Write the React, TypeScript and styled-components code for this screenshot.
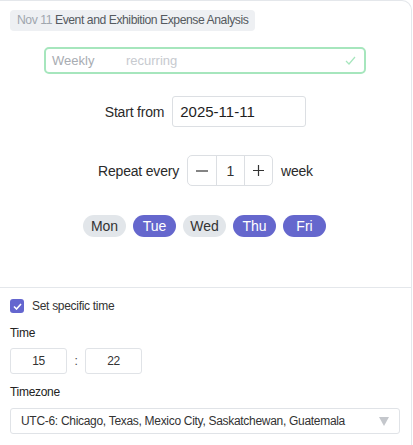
import React from "react";
import styled, { createGlobalStyle } from "styled-components";

const Global = createGlobalStyle`
  html, body { margin: 0; padding: 0; background: #fff; }
  body { font-family: "Liberation Sans", Arial, sans-serif; color: #222; }
  * { box-sizing: border-box; }
`;

const Page = styled.div`
  width: 413px;
  height: 445px;
  overflow: hidden;
  display: flex;
  flex-direction: column;
`;

const TopCard = styled.div`
  width: 412px;
  height: 288px;
  border-top: 1px solid #e4e7eb;
  border-right: 1px solid #e4e7eb;
  border-bottom: 1px solid #e4e7eb;
  border-top-right-radius: 10px;
  padding: 9px 0 0 10px;
  display: flex;
  flex-direction: column;
`;

const TitleChip = styled.div`
  align-self: flex-start;
  height: 21px;
  padding: 0 7px 0 7px;
  background: #eef0f3;
  border-radius: 4px;
  font-size: 12.2px;
  letter-spacing: -0.45px;
  line-height: 21px;
  color: #555a60;
`;

const Muted = styled.span`
  color: #a0a6ae;
`;

const RecurInput = styled.div`
  margin: 16px 0 0 34px;
  width: 322px;
  height: 27px;
  border: 2.5px solid #a6e6bd;
  border-radius: 5px;
  display: flex;
  align-items: center;
  padding: 0 8px 0 6px;
  font-size: 13px;
`;

const Weekly = styled.span`
  color: #a8acb2;
  width: 74px;
`;

const Recurring = styled.span`
  color: #c7cacf;
  flex: 1;
`;

const Row = styled.div<{ $mt: number }>`
  display: flex;
  align-items: center;
  justify-content: center;
  margin-top: ${(p) => p.$mt}px;
  padding-right: 10px;
`;

const Label = styled.span`
  font-size: 14px;
  letter-spacing: -0.2px;
  color: #2a2a2a;
`;

const DateBox = styled.div`
  margin-left: 8px;
  width: 134px;
  height: 31px;
  border: 1px solid #dcdfe3;
  border-radius: 3px;
  font-size: 15px;
  line-height: 29px;
  padding-left: 7px;
  color: #1e1e1e;
`;

const Stepper = styled.div`
  margin: 0 8px 0 8px;
  display: flex;
  height: 31px;
  border: 1px solid #dcdfe3;
  border-radius: 5px;
`;

const StepCell = styled.div<{ $border?: boolean }>`
  width: 28px;
  display: flex;
  align-items: center;
  justify-content: center;
  font-size: 14px;
  color: #333;
  border-left: ${(p) => (p.$border ? "1px solid #dcdfe3" : "none")};
`;

const Days = styled.div`
  display: flex;
  gap: 7px;
  margin: 29px 0 0 73px;
`;

const Pill = styled.div<{ $on: boolean }>`
  width: 43px;
  height: 22px;
  border-radius: 11px;
  display: flex;
  align-items: center;
  justify-content: center;
  font-size: 14px;
  background: ${(p) => (p.$on ? "#6567cd" : "#e2e6ea")};
  color: ${(p) => (p.$on ? "#fff" : "#333")};
`;

const Bottom = styled.div`
  flex: 1;
  width: 412px;
  border-right: 1px solid #e4e7eb;
  padding: 11px 0 0 10px;
  display: flex;
  flex-direction: column;
  font-size: 12px;
  letter-spacing: -0.3px;
`;

const CheckRow = styled.div`
  display: flex;
  align-items: center;
  gap: 8px;
  color: #333;
`;

const CheckBox = styled.div`
  width: 14px;
  height: 14px;
  border-radius: 3px;
  background: #6466cf;
  display: flex;
  align-items: center;
  justify-content: center;
`;

const FieldLabel = styled.div<{ $mt: number }>`
  color: #222;
  margin-top: ${(p) => p.$mt}px;
`;

const TimeRow = styled.div`
  display: flex;
  align-items: center;
  margin-top: 8px;
`;

const TimeBox = styled.div`
  width: 57px;
  height: 26px;
  border: 1px solid #e0e3e7;
  border-radius: 3px;
  display: flex;
  align-items: center;
  justify-content: center;
  color: #333;
`;

const Colon = styled.span`
  width: 18px;
  text-align: center;
  color: #444;
`;

const Select = styled.div`
  margin-top: 9px;
  width: 390px;
  height: 26px;
  border: 1px solid #e0e3e7;
  border-radius: 3px;
  display: flex;
  align-items: center;
  padding: 0 10px 0 10px;
  color: #333;
`;

const SelectText = styled.span`
  flex: 1;
  white-space: nowrap;
`;

export default function App() {
  return (
    <Page>
      <Global />
      <TopCard>
        <TitleChip>
          <Muted>Nov 11</Muted> Event and Exhibition Expense Analysis
        </TitleChip>
        <RecurInput>
          <Weekly>Weekly</Weekly>
          <Recurring>recurring</Recurring>
          <svg width="11" height="9" viewBox="0 0 11 9">
            <path d="M1 5 L4 8 L10 1" fill="none" stroke="#a6e6bd" strokeWidth="1.2" />
          </svg>
        </RecurInput>
        <Row $mt={22}>
          <Label>Start from</Label>
          <DateBox>2025-11-11</DateBox>
        </Row>
        <Row $mt={28}>
          <Label>Repeat every</Label>
          <Stepper>
            <StepCell>
              <svg width="12" height="2" viewBox="0 0 12 2">
                <path d="M0 1 H12" stroke="#333" strokeWidth="1.2" />
              </svg>
            </StepCell>
            <StepCell $border>1</StepCell>
            <StepCell $border>
              <svg width="11" height="11" viewBox="0 0 11 11">
                <path d="M0 5.5 H11 M5.5 0 V11" stroke="#333" strokeWidth="1.2" />
              </svg>
            </StepCell>
          </Stepper>
          <Label>week</Label>
        </Row>
        <Days>
          {[
            ["Mon", false],
            ["Tue", true],
            ["Wed", false],
            ["Thu", true],
            ["Fri", true],
          ].map(([d, on]) => (
            <Pill key={d as string} $on={on as boolean}>
              {d as string}
            </Pill>
          ))}
        </Days>
      </TopCard>
      <Bottom>
        <CheckRow>
          <CheckBox>
            <svg width="9" height="7" viewBox="0 0 9 7">
              <path d="M1 3.5 L3.5 6 L8 1" fill="none" stroke="#fff" strokeWidth="1.6" />
            </svg>
          </CheckBox>
          Set specific time
        </CheckRow>
        <FieldLabel $mt={13}>Time</FieldLabel>
        <TimeRow>
          <TimeBox>15</TimeBox>
          <Colon>:</Colon>
          <TimeBox>22</TimeBox>
        </TimeRow>
        <FieldLabel $mt={11}>Timezone</FieldLabel>
        <Select>
          <SelectText>UTC-6: Chicago, Texas, Mexico City, Saskatchewan, Guatemala</SelectText>
          <svg width="10" height="9" viewBox="0 0 10 9">
            <path d="M0 0 H10 L5 9 Z" fill="#c4c7cc" />
          </svg>
        </Select>
      </Bottom>
    </Page>
  );
}
